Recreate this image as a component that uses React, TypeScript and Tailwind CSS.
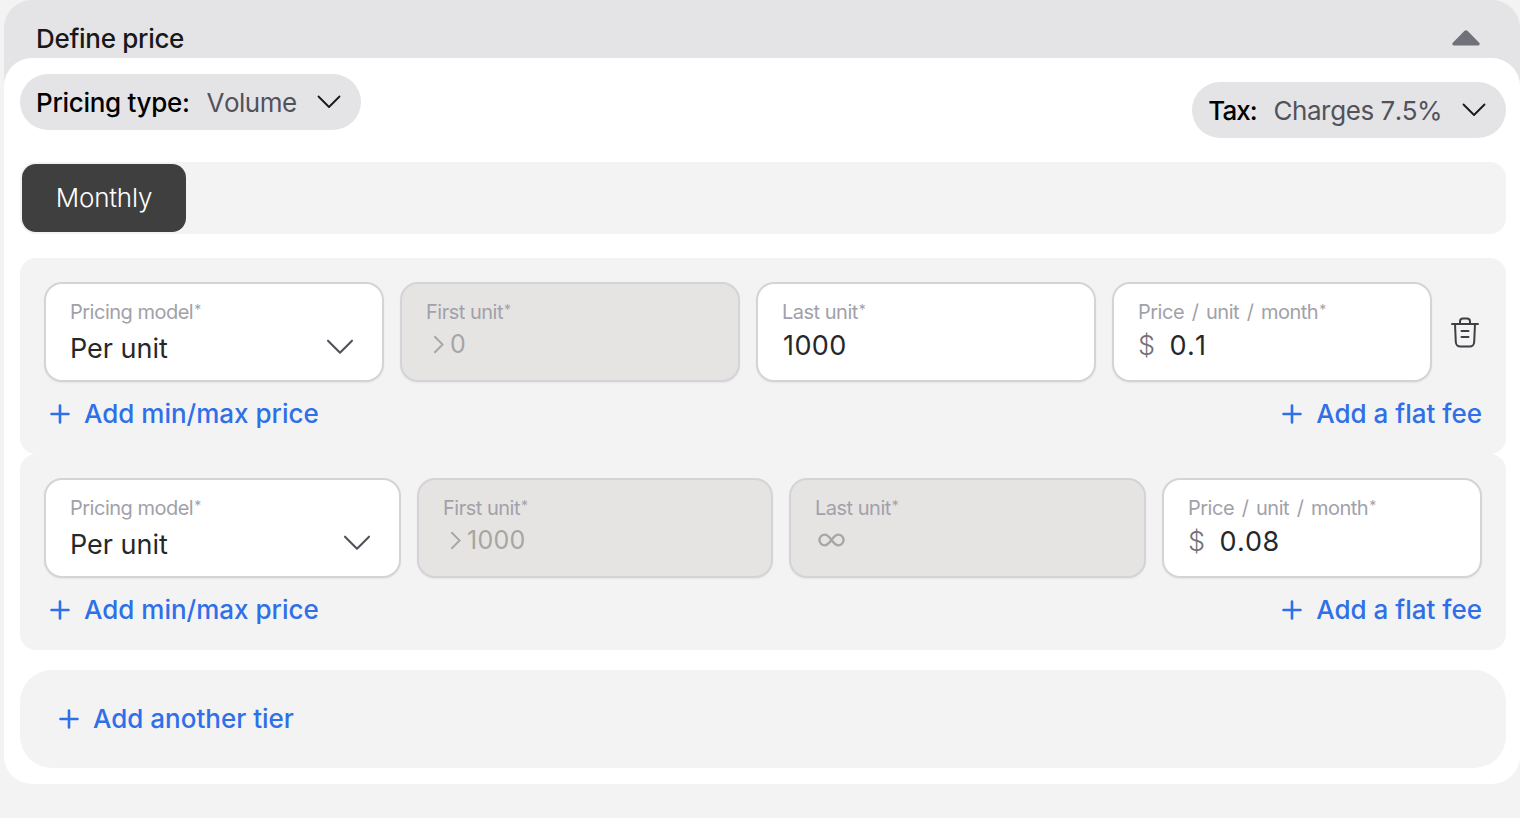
import React from "react";

const font = { fontFamily: '"Inter", "Liberation Sans", sans-serif' };

function Chevron({ className }: { className: string }) {
  return (
    <svg viewBox="0 0 24 14" fill="none" stroke="currentColor" strokeWidth="1.8" strokeLinecap="round" strokeLinejoin="round" className={className}>
      <path d="M1.5 1.5 12 12 22.5 1.5" />
    </svg>
  );
}

function Plus() {
  return (
    <svg viewBox="0 0 20 20" fill="none" stroke="currentColor" strokeWidth="2.6" strokeLinecap="round" className="w-5 h-5 shrink-0">
      <path d="M10 1.5v17M1.5 10h17" />
    </svg>
  );
}

function LinkAction({ label }: { label: string }) {
  return (
    <div className="flex items-center gap-[14px] text-[#2f6fe8] text-[26px] leading-8 font-medium">
      <Plus />
      <span>{label}</span>
    </div>
  );
}

function Trash() {
  return (
    <svg viewBox="0 0 28 32" fill="none" stroke="#3f3f46" strokeWidth="2" strokeLinecap="round" strokeLinejoin="round" className="w-7 h-8">
      <path d="M1 7h26" />
      <path d="M9 7V4.5C9 2.5 10.5 1.5 12 1.5h4c1.500 0 3 1 3 3V7" />
      <path d="M4 7l.8 18c.1 2.500 2 4.500 4.500 4.500h9.400c2.500 0 4.400-2 4.500-4.500L24 7" />
      <path d="M10.500 14h7M10.500 20h7" />
    </svg>
  );
}

function Field({
  label,
  width,
  disabled,
  labelClass,
  children,
}: {
  label: string;
  width: string;
  disabled?: boolean;
  labelClass?: string;
  children: React.ReactNode;
}) {
  return (
    <div
      className={`${width} h-[100px] shrink-0 rounded-[18px] border-2 border-[#d4d4d8] pl-6 pr-6 pt-[15px] shadow-[0_1px_2px_rgba(0,0,0,0.06)] ${
        disabled ? "bg-[#e5e4e3]" : "bg-white"
      }`}
    >
      <div className={`text-[20px] leading-[26px] text-[#a1a1aa] tracking-[-0.5px] ${labelClass ?? ""}`}>
        {label}
        <span className="text-[14px] leading-none relative -top-[4px] ml-[1px]">*</span>
      </div>
      {children}
    </div>
  );
}

function SelectField({ width }: { width: string }) {
  return (
    <Field label="Pricing model" width={width}>
      <div className="flex items-center justify-between pr-1 mt-[6px]">
        <span className="text-[27px] leading-9 text-[#27272a]">Per unit</span>
        <Chevron className="w-[28px] h-[16px] text-[#52525b] -mt-1" />
      </div>
    </Field>
  );
}

function DisabledValue({ value }: { value: string }) {
  return (
    <div className="flex items-center gap-[6px] pl-[7px] mt-[1px] text-[25px] leading-9 text-[#a8a5a2] [font-kerning:none] tracking-[0.3px]">
      <svg viewBox="0 0 12 20" fill="none" stroke="currentColor" strokeWidth="2" className="w-[11px] h-[19px]">
        <path d="M1.500 1 10.500 10 1.500 19" />
      </svg>
      <span>{value}</span>
    </div>
  );
}

function PriceValue({ value }: { value: string }) {
  return (
    <div className="flex items-center gap-[14px] mt-[3px] text-[27px] leading-9 [font-kerning:none] tracking-[0.4px]">
      <span className="text-[#71717a] font-light">$</span>
      <span className="text-[#27272a]">{value}</span>
    </div>
  );
}

function Pill({ name, value, className, nameClass }: { name: string; value: string; className: string; nameClass: string }) {
  return (
    <div className={`h-14 rounded-full bg-[#e4e4e7] flex items-center pl-4 pr-5 ${className}`}>
      <span className={`text-[26px] font-medium text-black ${nameClass}`}>{name}</span>
      <span className="text-[26px] text-[#52525b] ml-[17px] tracking-[-0.5px] [font-kerning:none]">{value}</span>
      <Chevron className="w-6 h-[14px] text-[#18181b] ml-[20px]" />
    </div>
  );
}

export default function App() {
  return (
    <div style={font} className="w-[1520px] h-[818px] overflow-hidden bg-[#f3f3f3] pl-1">
      <div className="h-[88px] rounded-t-[28px] bg-[#e4e4e7] flex justify-between pl-8 pr-10">
        <span className="text-[26px] leading-8 mt-[23px] font-medium text-[#18181b] tracking-[-0.3px]">Define price</span>
        <svg viewBox="0 0 28 16" className="w-7 h-4 mt-[30px] text-[#71717a]" fill="currentColor">
          <path d="M12.300 1 .8 12.800C-.1 13.800.3 15.500 1.800 15.500h24.400c1.500 0 1.900-1.700 1-2.700L15.700 1c-1-1-2.400-1-3.400 0z" />
        </svg>
      </div>

      <div className="relative -mt-[30px] h-[726px] rounded-[28px] bg-white pl-4 pr-[14px] pt-4">
        <div className="flex items-start justify-between">
          <Pill name="Pricing type:" value="Volume" className="" nameClass="tracking-[-0.3px]" />
          <Pill name="Tax:" value="Charges 7.5%" className="mt-2" nameClass="tracking-[-1px]" />
        </div>

        <div className="mt-6 h-[72px] rounded-2xl bg-[#f3f3f3] p-[2px] flex">
          <div className="w-[164px] h-[68px] pb-[2px] rounded-[14px] bg-[#3f3f3f] flex items-center justify-center text-white text-[26px] font-light tracking-[-0.2px]">
            Monthly
          </div>
        </div>

        <div className="mt-6 h-[196px] rounded-2xl bg-[#f3f3f3] pl-6 pr-6 pt-6">
          <div className="flex items-center gap-4">
            <SelectField width="w-[340px]" />
            <Field label="First unit" width="w-[340px]" disabled>
              <DisabledValue value="0" />
            </Field>
            <Field label="Last unit" width="w-[340px]">
              <div className="mt-[3px] ml-[1px] text-[27px] leading-9 text-[#27272a] [font-kerning:none] tracking-[0.4px]">1000</div>
            </Field>
            <Field label="Price / unit / month" width="w-[320px]" labelClass="[word-spacing:2.5px]">
              <PriceValue value="0.1" />
            </Field>
            <div className="ml-[3px] mt-[2px]">
              <Trash />
            </div>
          </div>
          <div className="flex justify-between pl-[6px] mt-4">
            <LinkAction label="Add min/max price" />
            <LinkAction label="Add a flat fee" />
          </div>
        </div>

        <div className="h-[196px] rounded-2xl bg-[#f3f3f3] pl-6 pr-6 pt-6">
          <div className="flex items-center gap-4">
            <SelectField width="w-[357px]" />
            <Field label="First unit" width="w-[356px]" disabled>
              <DisabledValue value="1000" />
            </Field>
            <Field label="Last unit" width="w-[357px]" disabled>
              <svg viewBox="0 0 28 14" fill="none" stroke="#a8a5a2" strokeWidth="2.400" className="w-[27px] h-[14px] mt-3 ml-[3px]">
                <path d="M14 7C11.500 3.500 9.500 1.500 7 1.500a5.500 5.500 0 0 0 0 11c2.500 0 4.500-2 7-5.500 2.500-3.500 4.500-5.500 7-5.500a5.500 5.500 0 0 1 0 11c-2.500 0-4.500-2-7-5.500z" />
              </svg>
            </Field>
            <Field label="Price / unit / month" width="w-[320px]" labelClass="[word-spacing:2.5px]">
              <PriceValue value="0.08" />
            </Field>
          </div>
          <div className="flex justify-between pl-[6px] mt-4">
            <LinkAction label="Add min/max price" />
            <LinkAction label="Add a flat fee" />
          </div>
        </div>

        <div className="mt-5 h-[98px] rounded-[32px] bg-[#f3f3f3] flex items-center pl-[39px]">
          <LinkAction label="Add another tier" />
        </div>
      </div>
    </div>
  );
}
